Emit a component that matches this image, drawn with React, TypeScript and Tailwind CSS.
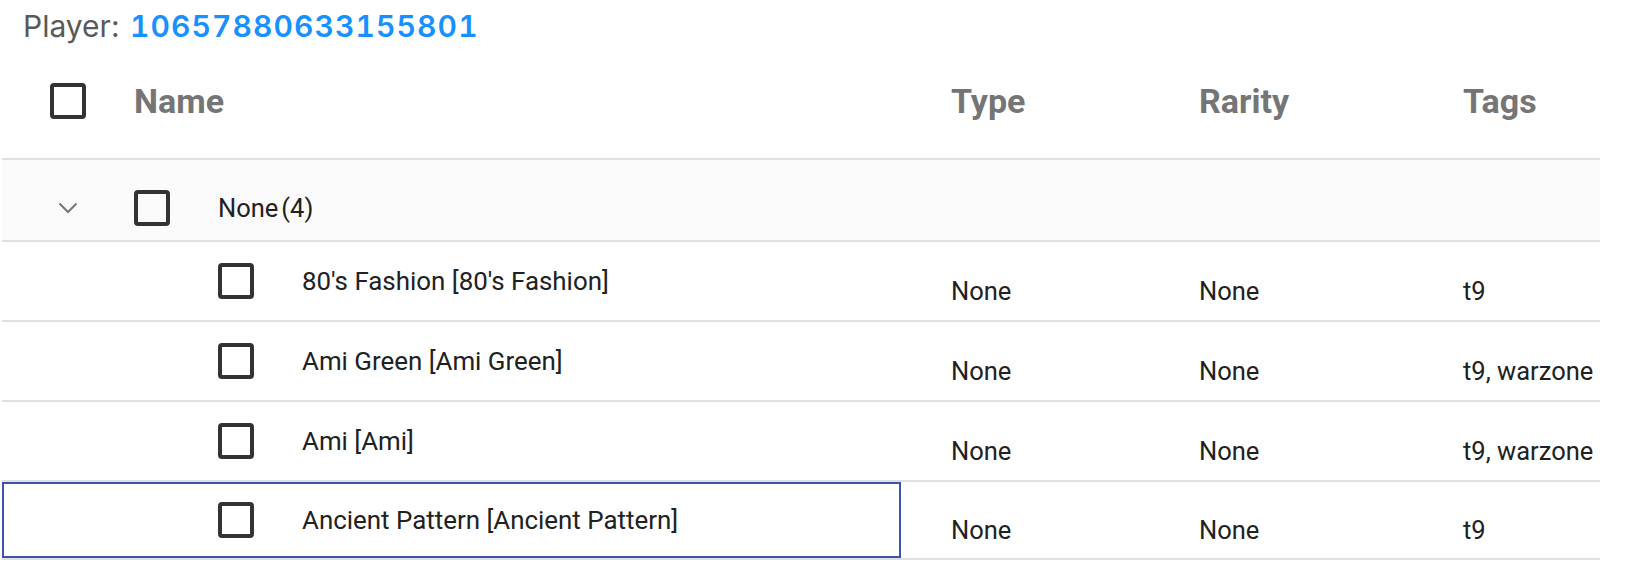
import React from 'react';

type Item = {
  name: string;
  type: string;
  rarity: string;
  tags: string;
};

const items: Item[] = [
  { name: "80's Fashion [80's Fashion]", type: 'None', rarity: 'None', tags: 't9' },
  { name: 'Ami Green [Ami Green]', type: 'None', rarity: 'None', tags: 't9, warzone' },
  { name: 'Ami [Ami]', type: 'None', rarity: 'None', tags: 't9, warzone' },
  { name: 'Ancient Pattern [Ancient Pattern]', type: 'None', rarity: 'None', tags: 't9' },
];

function Checkbox() {
  return <div className="w-9 h-9 shrink-0 rounded-[4px] border-4 border-[#333333]" />;
}

function App() {
  return (
    <div className="w-[1630px] h-[586px] bg-white font-['Roboto',sans-serif] text-[#212121]">
      {/* player */}
      <div className="pt-2 pl-[23px] text-[30px] leading-[36px] font-['Inter',sans-serif] text-[#595959]">
        Player:{' '}
        <span className="ml-[2px] text-[#1890ff] font-semibold tabular-nums tracking-[1.1px]">
          10657880633155801
        </span>
      </div>

      <div className="ml-[2px] w-[1598px]">
        {/* header */}
        <div className="grid grid-cols-[899px_248px_264px_1fr] h-[116px] border-b-2 border-[#e0e0e0] text-[34px] font-bold text-[#757575]">
          <div className="flex items-center pl-12 gap-[48px]">
            <Checkbox />
            <span>Name</span>
          </div>
          <div className="flex items-center pl-[50px]">Type</div>
          <div className="flex items-center pl-[50px]">Rarity</div>
          <div className="flex items-center pl-[50px]">Tags</div>
        </div>

        {/* group */}
        <div className="flex items-center h-[82px] pt-4 bg-[#fafafa] border-b-2 border-[#e0e0e0] text-[25.5px]">
          <svg className="ml-[56px] shrink-0" width="20" height="12" viewBox="0 0 20 12">
            <polyline points="1.5,1.5 10,10 18.5,1.5" fill="none" stroke="#757575" strokeWidth="2" />
          </svg>
          <div className="ml-[56px]">
            <Checkbox />
          </div>
          <span className="ml-[48px]">
            None<span className="ml-[3px]">(4)</span>
          </span>
        </div>

        {/* rows */}
        {items.map((item, index) => {
          const last = index === items.length - 1;
          return (
            <div
              key={index}
              className={
                last
                  ? 'grid grid-cols-[899px_248px_264px_1fr] h-[78px] border-b-2 border-[#e0e0e0] text-[25.5px]'
                  : 'grid grid-cols-[899px_248px_264px_1fr] h-20 border-b-2 border-[#e0e0e0] text-[25.5px]'
              }
            >
              <div
                className={
                  last
                    ? 'flex items-center pl-[216px] gap-[48px] outline-2 -outline-offset-2 outline-[#3f51b5]'
                    : 'flex items-center pl-[216px] gap-[48px]'
                }
              >
                <Checkbox />
                <span className="text-[25.9px]">{item.name}</span>
              </div>
              <div className="flex items-center pl-[50px] pt-5">{item.type}</div>
              <div className="flex items-center pl-[50px] pt-5">{item.rarity}</div>
              <div className="flex items-center pl-[50px] pt-5">{item.tags}</div>
            </div>
          );
        })}
      </div>
    </div>
  );
}

export default App;
